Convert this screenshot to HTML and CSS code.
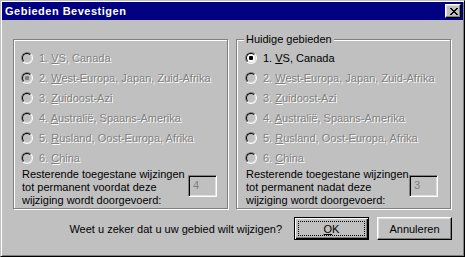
FILE: index.html
```html
<!DOCTYPE html>
<html lang="nl">
<head>
    <meta charset="UTF-8">
    <title>Gebieden Bevestigen</title>
    <link rel="stylesheet" href="styles.css">
</head>
<body>
    <div class="window">
        <div class="titlebar">
            <span class="title">Gebieden Bevestigen</span>
            <button class="close-btn" aria-label="Sluiten">
                <svg width="8" height="7" viewBox="0 0 8 7" shape-rendering="crispEdges">
                    <path d="M0 0h2v1h-2z M6 0h2v1h-2z M1 1h2v1h-2z M5 1h2v1h-2z M2 2h4v1h-4z M3 3h2v1h-2z M2 4h4v1h-4z M1 5h2v1h-2z M5 5h2v1h-2z M0 6h2v1h-2z M6 6h2v1h-2z" fill="#000"/>
                </svg>
            </button>
        </div>

        <div class="content">
            <div class="groups">
                <div class="group">
                    <div class="option disabled"><span class="radio"></span><span>1. <u>V</u>S, Canada</span></div>
                    <div class="option disabled"><span class="radio checked"></span><span>2. <u>W</u>est-Europa, Japan, Zuid-Afrika</span></div>
                    <div class="option disabled"><span class="radio"></span><span>3. <u>Z</u>uidoost-Azi</span></div>
                    <div class="option disabled"><span class="radio"></span><span>4. <u>A</u>ustralië, Spaans-Amerika</span></div>
                    <div class="option disabled"><span class="radio"></span><span>5. <u>R</u>usland, Oost-Europa, Afrika</span></div>
                    <div class="option disabled"><span class="radio"></span><span>6. <u>C</u>hina</span></div>
                    <div class="remaining">
                        <p>Resterende toegestane wijzingen<br>tot permanent voordat deze<br>wijziging wordt doorgevoerd:</p>
                        <div class="edit">4</div>
                    </div>
                </div>

                <div class="group current">
                    <span class="caption">Huidige gebieden</span>
                    <div class="option"><span class="radio checked"></span><span>1. <u>V</u>S, Canada</span></div>
                    <div class="option disabled"><span class="radio"></span><span>2. <u>W</u>est-Europa, Japan, Zuid-Afrika</span></div>
                    <div class="option disabled"><span class="radio"></span><span>3. <u>Z</u>uidoost-Azi</span></div>
                    <div class="option disabled"><span class="radio"></span><span>4. <u>A</u>ustralië, Spaans-Amerika</span></div>
                    <div class="option disabled"><span class="radio"></span><span>5. <u>R</u>usland, Oost-Europa, Afrika</span></div>
                    <div class="option disabled"><span class="radio"></span><span>6. <u>C</u>hina</span></div>
                    <div class="remaining">
                        <p>Resterende toegestane wijzingen<br>tot permanent nadat deze<br>wijziging wordt doorgevoerd:</p>
                        <div class="edit">3</div>
                    </div>
                </div>
            </div>

            <div class="actions">
                <span class="question">Weet u zeker dat u uw gebied wilt wijzigen?</span>
                <button class="btn btn-default"><span class="focus"><u>O</u>K</span></button>
                <button class="btn">Annuleren</button>
            </div>
        </div>
    </div>
</body>
</html>
```

FILE: styles.css
```css
* {
    box-sizing: border-box;
}

body {
    margin: 0;
    background: #c0c0c0;
    font-family: "Liberation Sans", Arial, sans-serif;
    font-size: 11px;
    color: #000;
}

.window {
    width: 465px;
    height: 257px;
    background: #c0c0c0;
    border: 1px solid;
    border-color: #c0c0c0 #000 #000 #c0c0c0;
    box-shadow: inset 1px 1px 0 #fff, inset -1px -1px 0 #808080;
    padding: 1px;
}

.titlebar {
    height: 18px;
    background: #000080;
    display: flex;
    align-items: center;
    justify-content: space-between;
    padding: 0 2px 0 3px;
}

.title {
    color: #fff;
    font-weight: bold;
    font-size: 11px;
    letter-spacing: 0.5px;
}

.close-btn {
    width: 16px;
    height: 14px;
    padding: 0 0 0 1px;
    background: #c0c0c0;
    border: 1px solid;
    border-color: #fff #000 #000 #fff;
    box-shadow: inset -1px -1px 0 #808080, inset 1px 1px 0 #dfdfdf;
    display: flex;
    align-items: center;
    justify-content: center;
}

.close-btn svg {
    display: block;
}

.content {
    padding: 19px 11px 0 11px;
}

.groups {
    display: flex;
    gap: 8px;
}

.group {
    position: relative;
    width: 215px;
    height: 170px;
    border: 1px solid #808080;
    box-shadow: inset 1px 1px 0 #fff, 1px 1px 0 #fff;
    padding: 8px 0 0 7px;
}

.group.current {
    padding-left: 8px;
}

.caption {
    position: absolute;
    top: -7px;
    left: 7px;
    padding: 0 2px;
    line-height: 13px;
    background: #c0c0c0;
}

.option {
    height: 20px;
    display: flex;
    align-items: center;
    gap: 6px;
    white-space: nowrap;
}

.option.disabled {
    color: #808080;
    text-shadow: 1px 1px 0 #fff;
}

.radio {
    width: 12px;
    height: 12px;
    flex: none;
    border-radius: 50%;
    border: 1px solid;
    border-color: #808080 #fff #fff #808080;
    position: relative;
}

.radio::before {
    content: "";
    position: absolute;
    inset: 0;
    border-radius: 50%;
    border: 1px solid;
    border-color: #000 #dfdfdf #dfdfdf #000;
    background: #fff;
}

.disabled .radio::before {
    background: #c0c0c0;
}

.radio.checked::after {
    content: "";
    position: absolute;
    left: 3px;
    top: 3px;
    width: 4px;
    height: 4px;
    border-radius: 1px;
    background: #000;
}

.disabled .radio.checked::after {
    background: #808080;
}

.remaining {
    display: flex;
    padding-left: 1px;
}

.remaining p {
    margin: 0;
    width: 166px;
    line-height: 13px;
}

.current .remaining p {
    width: 163px;
}

.edit {
    margin-top: 7px;
    width: 29px;
    height: 22px;
    border: 1px solid;
    border-color: #808080 #fff #fff #808080;
    box-shadow: inset 1px 1px 0 #000, inset -1px -1px 0 #dfdfdf;
    color: #808080;
    padding: 2px 0 0 4px;
    line-height: 14px;
}

.actions {
    display: flex;
    align-items: center;
    justify-content: flex-end;
    gap: 8px;
    margin-top: 8px;
    padding-right: 0;
}

.question {
    margin-right: 4px;
}

.btn {
    width: 75px;
    height: 23px;
    padding: 0;
    background: #c0c0c0;
    border: 1px solid;
    border-color: #fff #000 #000 #fff;
    box-shadow: inset -1px -1px 0 #808080, inset 1px 1px 0 #dfdfdf;
    font-family: "Liberation Sans", Arial, sans-serif;
    font-size: 11px;
    color: #000;
}

.btn-default {
    border-color: #000;
    box-shadow: inset 1px 1px 0 #fff, inset -1px -1px 0 #000, inset -2px -2px 0 #808080;
    padding: 3px;
    display: flex;
}

.focus {
    flex: 1;
    border: 1px dotted #000;
    display: flex;
    align-items: center;
    justify-content: center;
}
```
